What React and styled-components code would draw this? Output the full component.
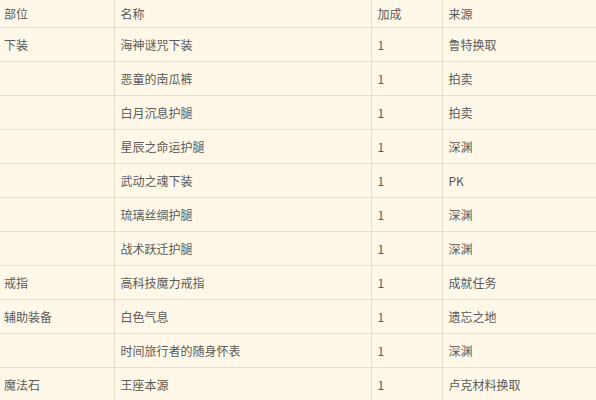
import React from 'react'
import styled, { createGlobalStyle } from 'styled-components'

const GlobalStyle = createGlobalStyle`
    html, body {
        margin: 0;
        padding: 0;
        background: #fff8e8;
    }
    body {
        font-family: "Noto Sans CJK SC", "Noto Sans", sans-serif;
        color: #5a5a5a;
        overflow: hidden;
    }
`

const Page = styled.div`
    width: 596px;
    height: 400px;
    overflow: hidden;
    background: #fff8e8;
`

const Table = styled.table`
    border-collapse: collapse;
    table-layout: fixed;
    width: 650px;
    font-size: 12px;
`

const Col = styled.col`
    width: ${p => p.$w}px;
`

const HeadCell = styled.th`
    height: 27px;
    padding: 0 0 0 ${p => (p.$first ? '4px' : '6px')};
    text-align: left;
    font-weight: normal;
    color: #5a5a5a;
    border-bottom: 1px solid #e8dcc6;
    border-left: ${p => (p.$first ? 'none' : '1px solid #e8dcc6')};
    line-height: 12px;
    vertical-align: middle;
`

const Cell = styled.td`
    height: 33px;
    padding: 0 0 0 ${p => (p.$first ? '4px' : '6px')};
    color: #5a5a5a;
    border-bottom: 1px solid #e8dcc6;
    border-left: ${p => (p.$first ? 'none' : '1px solid #e8dcc6')};
    white-space: nowrap;
    vertical-align: middle;
    line-height: 12px;
`

const columns = [
    { title: '部位', width: 114 },
    { title: '名称', width: 257 },
    { title: '加成', width: 71 },
    { title: '来源', width: 208 },
]

const rows = [
    ['下装', '海神谜咒下装', '1', '鲁特换取'],
    ['', '恶童的南瓜裤', '1', '拍卖'],
    ['', '白月沉息护腿', '1', '拍卖'],
    ['', '星辰之命运护腿', '1', '深渊'],
    ['', '武动之魂下装', '1', 'PK'],
    ['', '琉璃丝绸护腿', '1', '深渊'],
    ['', '战术跃迁护腿', '1', '深渊'],
    ['戒指', '高科技魔力戒指', '1', '成就任务'],
    ['辅助装备', '白色气息', '1', '遗忘之地'],
    ['', '时间旅行者的随身怀表', '1', '深渊'],
    ['魔法石', '王座本源', '1', '卢克材料换取'],
]

const App = () => {
    return (
        <>
            <GlobalStyle />
            <Page>
                <Table>
                    <colgroup>
                        {columns.map(c => (
                            <Col key={c.title} $w={c.width} />
                        ))}
                    </colgroup>
                    <thead>
                        <tr>
                            {columns.map((c, j) => (
                                <HeadCell key={c.title} $first={j === 0}>{c.title}</HeadCell>
                            ))}
                        </tr>
                    </thead>
                    <tbody>
                        {rows.map((r, i) => (
                            <tr key={i}>
                                {r.map((c, j) => (
                                    <Cell key={j} $first={j === 0}>{c}</Cell>
                                ))}
                            </tr>
                        ))}
                    </tbody>
                </Table>
            </Page>
        </>
    )
}

export default App
